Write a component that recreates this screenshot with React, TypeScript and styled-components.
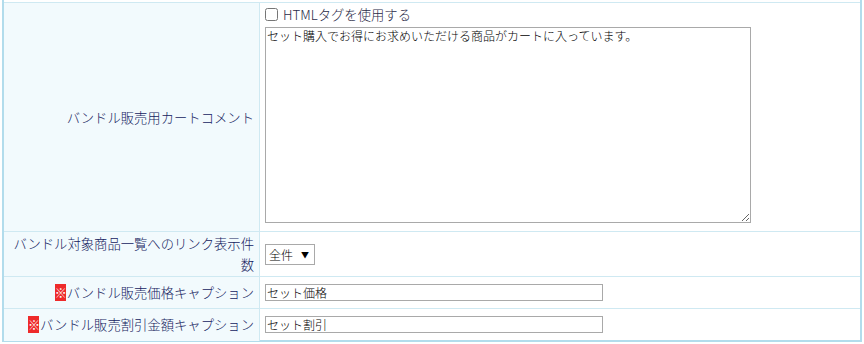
import React from 'react';
import styled, { createGlobalStyle } from 'styled-components';

const GlobalStyle = createGlobalStyle`
    body {
        margin: 0;
        background: #ffffff;
        font-family: "Noto Sans CJK JP", "Liberation Sans", sans-serif;
    }
`;

const Frame = styled.div`
    margin: 0 2px;
    padding-top: 2px;
    border: 2px solid #b2dcec;
    border-top: none;
    height: 342px;
    box-sizing: border-box;
`;

const FormTable = styled.table`
    width: 100%;
    border-collapse: collapse;
`;

const Row = styled.tr<{ height: number }>`
    height: ${props => props.height}px;
    border-top: 1px solid #cfe9f2;
`;

const LabelCell = styled.th`
    width: 246px;
    padding: 0 5px 0 4px;
    text-align: right;
    vertical-align: middle;
    font-weight: 300;
    font-size: 10pt;
    line-height: 21px;
    color: #141a60;
    border-right: 1px solid #cfe9f2;
    background-color: #f3fafd;
    background-image: repeating-conic-gradient(#e4f4fb 0% 25%, #ffffff 0% 50%);
    background-size: 2px 2px;
`;

const ValueCell = styled.td<{ top?: boolean }>`
    padding: ${props => props.top ? '1px 5px 0' : '0 5px'};
    vertical-align: ${props => props.top ? 'top' : 'middle'};
    font-size: 10pt;
    color: #333;
`;

const CheckLine = styled.label`
    display: flex;
    align-items: center;
    gap: 5px;
    height: 20px;
    margin-bottom: 3px;
    font-weight: 300;
    color: #2b2b48;
`;

const Check = styled.input`
    width: 13px;
    height: 13px;
    margin: 0;
`;

const Comment = styled.textarea`
    display: block;
    width: 486px;
    height: 196px;
    box-sizing: border-box;
    border: 1px solid #a9a9a9;
    padding: 1px 1px;
    font-family: "Noto Sans CJK JP", sans-serif;
    font-weight: 300;
    font-size: 12px;
    line-height: 14px;
    color: #000;
    resize: both;
`;

const SelectWrap = styled.span`
    position: relative;
    display: inline-block;

    &::after {
        content: "▼";
        position: absolute;
        right: 6px;
        top: 5px;
        font-size: 8px;
        color: #000;
        pointer-events: none;
    }
`;

const Select = styled.select`
    appearance: none;
    width: 50px;
    height: 21px;
    box-sizing: border-box;
    border: 1px solid #a9a9a9;
    border-radius: 0;
    background: #fff;
    padding: 0 0 0 3px;
    font-family: "Noto Sans CJK JP", sans-serif;
    font-weight: 300;
    font-size: 12px;
    color: #000;
`;

const TextInput = styled.input`
    display: block;
    width: 338px;
    height: 17px;
    box-sizing: border-box;
    border: 1px solid #a9a9a9;
    padding: 0 1px;
    font-family: "Noto Sans CJK JP", sans-serif;
    font-weight: 300;
    font-size: 12px;
    color: #000;
`;

const Required = styled.span`
    display: inline-block;
    width: 11px;
    height: 17px;
    margin-right: 1px;
    background: #ee2a2a;
    color: #fff;
    font-size: 12px;
    line-height: 17px;
    text-align: center;
    vertical-align: -3px;
    overflow: hidden;
`;

export default function App() {
    return (
        <>
            <GlobalStyle />
            <Frame>
                <FormTable>
                    <tbody>
                        <Row height={229}>
                            <LabelCell>バンドル販売用カートコメント</LabelCell>
                            <ValueCell top>
                                <CheckLine>
                                    <Check type="checkbox" />
                                    HTMLタグを使用する
                                </CheckLine>
                                <Comment defaultValue="セット購入でお得にお求めいただける商品がカートに入っています。" />
                            </ValueCell>
                        </Row>
                        <Row height={45}>
                            <LabelCell>バンドル対象商品一覧へのリンク表示件数</LabelCell>
                            <ValueCell>
                                <SelectWrap>
                                    <Select defaultValue="all">
                                        <option value="all">全件</option>
                                    </Select>
                                </SelectWrap>
                            </ValueCell>
                        </Row>
                        <Row height={32}>
                            <LabelCell>
                                <Required>※</Required>バンドル販売価格キャプション
                            </LabelCell>
                            <ValueCell>
                                <TextInput defaultValue="セット価格" />
                            </ValueCell>
                        </Row>
                        <Row height={32}>
                            <LabelCell>
                                <Required>※</Required>バンドル販売割引金額キャプション
                            </LabelCell>
                            <ValueCell>
                                <TextInput defaultValue="セット割引" />
                            </ValueCell>
                        </Row>
                    </tbody>
                </FormTable>
            </Frame>
        </>
    );
}
